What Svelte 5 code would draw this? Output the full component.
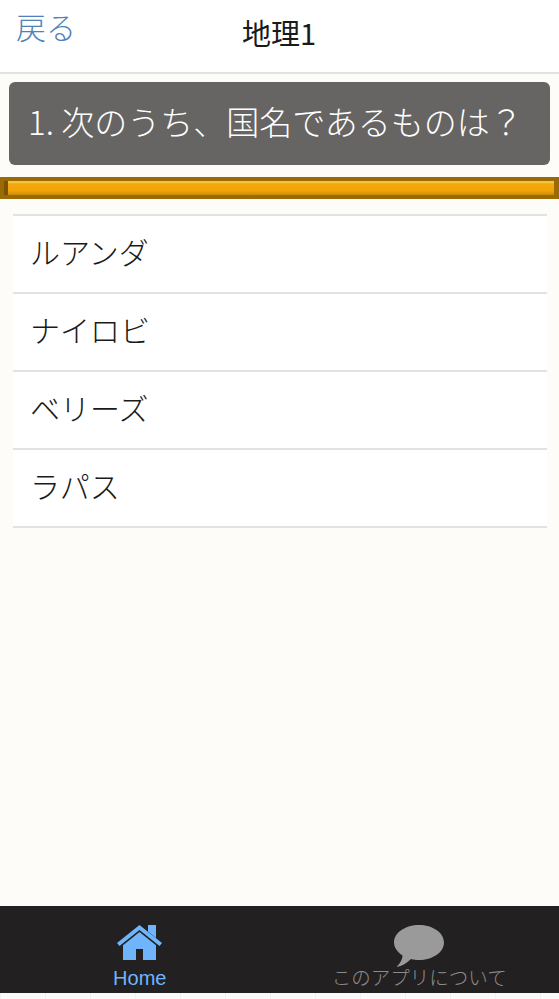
<script>
  const choices = ['ルアンダ', 'ナイロビ', 'ベリーズ', 'ラパス'];
</script>

<div class="page">
  <header class="topbar">
    <a class="back" href="#back">戻る</a>
    <h1>地理1</h1>
  </header>

  <main class="content">
    <div class="question">1. 次のうち、国名であるものは？</div>

    <div class="progress">
      <div class="progress-fill"></div>
    </div>

    <ul class="choices">
      {#each choices as choice}
        <li>{choice}</li>
      {/each}
    </ul>
  </main>

  <nav class="tabs">
    <div class="tab active">
      <svg class="icon-home" viewBox="0 0 46 36" aria-hidden="true">
        <path d="M31 0h8v13l-8-6.500z" fill="currentColor" />
        <path d="M22.500 0 45 18l-2.500 3L22.500 5 2.500 21 0 18z" fill="currentColor" />
        <path
          fill-rule="evenodd"
          d="M22.500 7 39 20.200V35H6V20.200zM19 24v11h7V24z"
          fill="currentColor"
        />
      </svg>
      <span>Home</span>
    </div>
    <div class="tab">
      <svg class="icon-chat" viewBox="0 0 50 42" aria-hidden="true">
        <path
          d="M25 0C38.500 0 50 7.500 50 17.500 50 27.500 38.500 35 25 35 22 35 19.500 34.700 17 34 13 38 8 41 2.500 42 6 38.500 8.500 34.500 8.500 30.500 3.500 27 0 22.500 0 17.500 0 7.500 11.500 0 25 0z"
          fill="currentColor"
        />
      </svg>
      <span>このアプリについて</span>
    </div>
  </nav>

  <div class="footer-strip"></div>
</div>

<style>
  :global(body) {
    margin: 0;
    background: #fdfcf8;
  }

  .page {
    display: flex;
    flex-direction: column;
    height: 999px;
    overflow: hidden;
    font-family: 'Noto Sans CJK JP', 'Liberation Sans', sans-serif;
    font-weight: 300;
    color: #222;
  }

  .topbar {
    position: relative;
    flex: none;
    height: 72px;
    background: #fff;
    border-bottom: 2px solid #e2e2e0;
    display: flex;
    align-items: center;
    justify-content: center;
  }

  .back {
    position: absolute;
    left: 16px;
    top: 5px;
    font-size: 30px;
    line-height: 42px;
    color: #4f81b8;
    text-decoration: none;
  }

  h1 {
    margin: 0 1px 8px 0;
    font-size: 29px;
    line-height: 40px;
    font-weight: 400;
    color: #1a1a1a;
  }

  .content {
    flex: 1;
    display: flex;
    flex-direction: column;
    padding-top: 8px;
  }

  .question {
    margin: 0 9px;
    height: 83px;
    box-sizing: border-box;
    padding: 0 0 6px 19px;
    display: flex;
    align-items: center;
    background: #666564;
    border-radius: 6px;
    color: #fff;
    font-size: 33px;
    white-space: nowrap;
  }

  .progress {
    margin-top: 12px;
    height: 22px;
    box-sizing: border-box;
    padding: 4px 5px 4px 4px;
    background: #9a6a05;
  }

  .progress-fill {
    height: 100%;
    border-left: 4px solid #7a5206;
    background: linear-gradient(#f9c13c 0, #f9c13c 12%, #f3a90c 20%, #f0a408 70%, #c98a0a 100%);
  }

  .choices {
    list-style: none;
    margin: 15px 12px 0 13px;
    padding: 0;
    background: #fff;
    border-top: 2px solid #e2e2e0;
  }

  .choices li {
    height: 70px;
    border-bottom: 2px solid #e2e2e0;
    padding: 0 0 6px 17px;
    display: flex;
    align-items: center;
    font-size: 30px;
    color: #1a1a1a;
  }

  .tabs {
    flex: none;
    height: 87px;
    background: #222021;
    display: grid;
    grid-template-columns: 1fr 1fr;
  }

  .tab {
    display: flex;
    flex-direction: column;
    align-items: center;
    color: #8c8c8c;
    font-size: 19.5px;
    line-height: 24px;
  }

  .tab.active {
    color: #70b5fb;
    font-family: 'Liberation Sans', sans-serif;
    font-weight: 400;
    font-size: 20px;
  }

  .icon-home {
    display: block;
    width: 46px;
    height: 36px;
    margin-top: 19px;
    margin-bottom: 5px;
  }

  .icon-chat {
    display: block;
    width: 50px;
    height: 42px;
    margin-top: 19px;
    margin-bottom: -2px;
    color: #9a9a9a;
  }

  .footer-strip {
    flex: none;
    height: 6px;
    background: repeating-linear-gradient(90deg, #f0f0f0 0 1px, #fafafa 1px 45px);
  }
</style>
